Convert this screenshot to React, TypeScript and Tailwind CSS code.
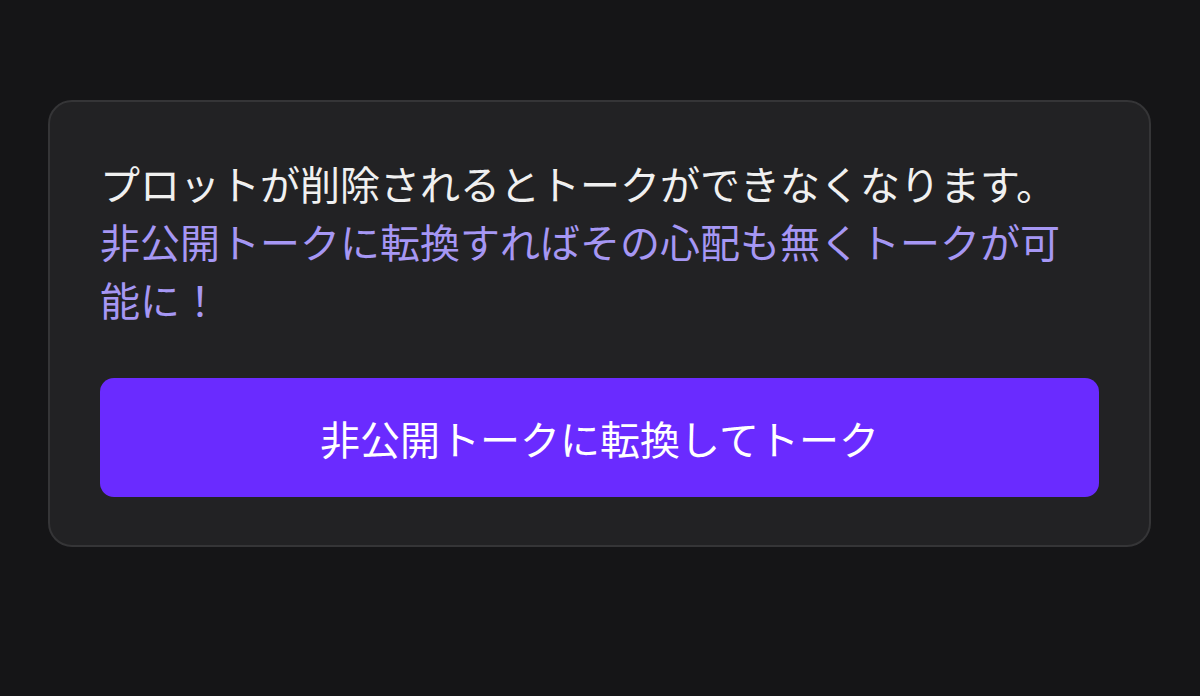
export default function App() {
  return (
    <div
      className="min-h-[696px] w-full bg-[#151517] pt-[100px]"
      style={{ fontFamily: '"Noto Sans CJK JP", "Noto Sans", sans-serif' }}
    >
      <div className="ml-[48px] mr-[49px] rounded-[24px] border-2 border-[#353537] bg-[#222224] px-[50px] pt-[52px] pb-[48px]">
        <p className="max-w-[990px] text-[40px] leading-[58px] text-[#f0f0f0]">
          プロットが削除されるとトークができなくなります。
          <br />
          <span className="text-[#a697f4]">非公開トークに転換すればその心配も無くトークが可能に！</span>
        </p>
        <button className="mt-[50px] flex h-[119px] w-full items-center justify-center rounded-[14px] bg-[#6a2bff] text-[40px] text-white">
          非公開トークに転換してトーク
        </button>
      </div>
    </div>
  );
}
